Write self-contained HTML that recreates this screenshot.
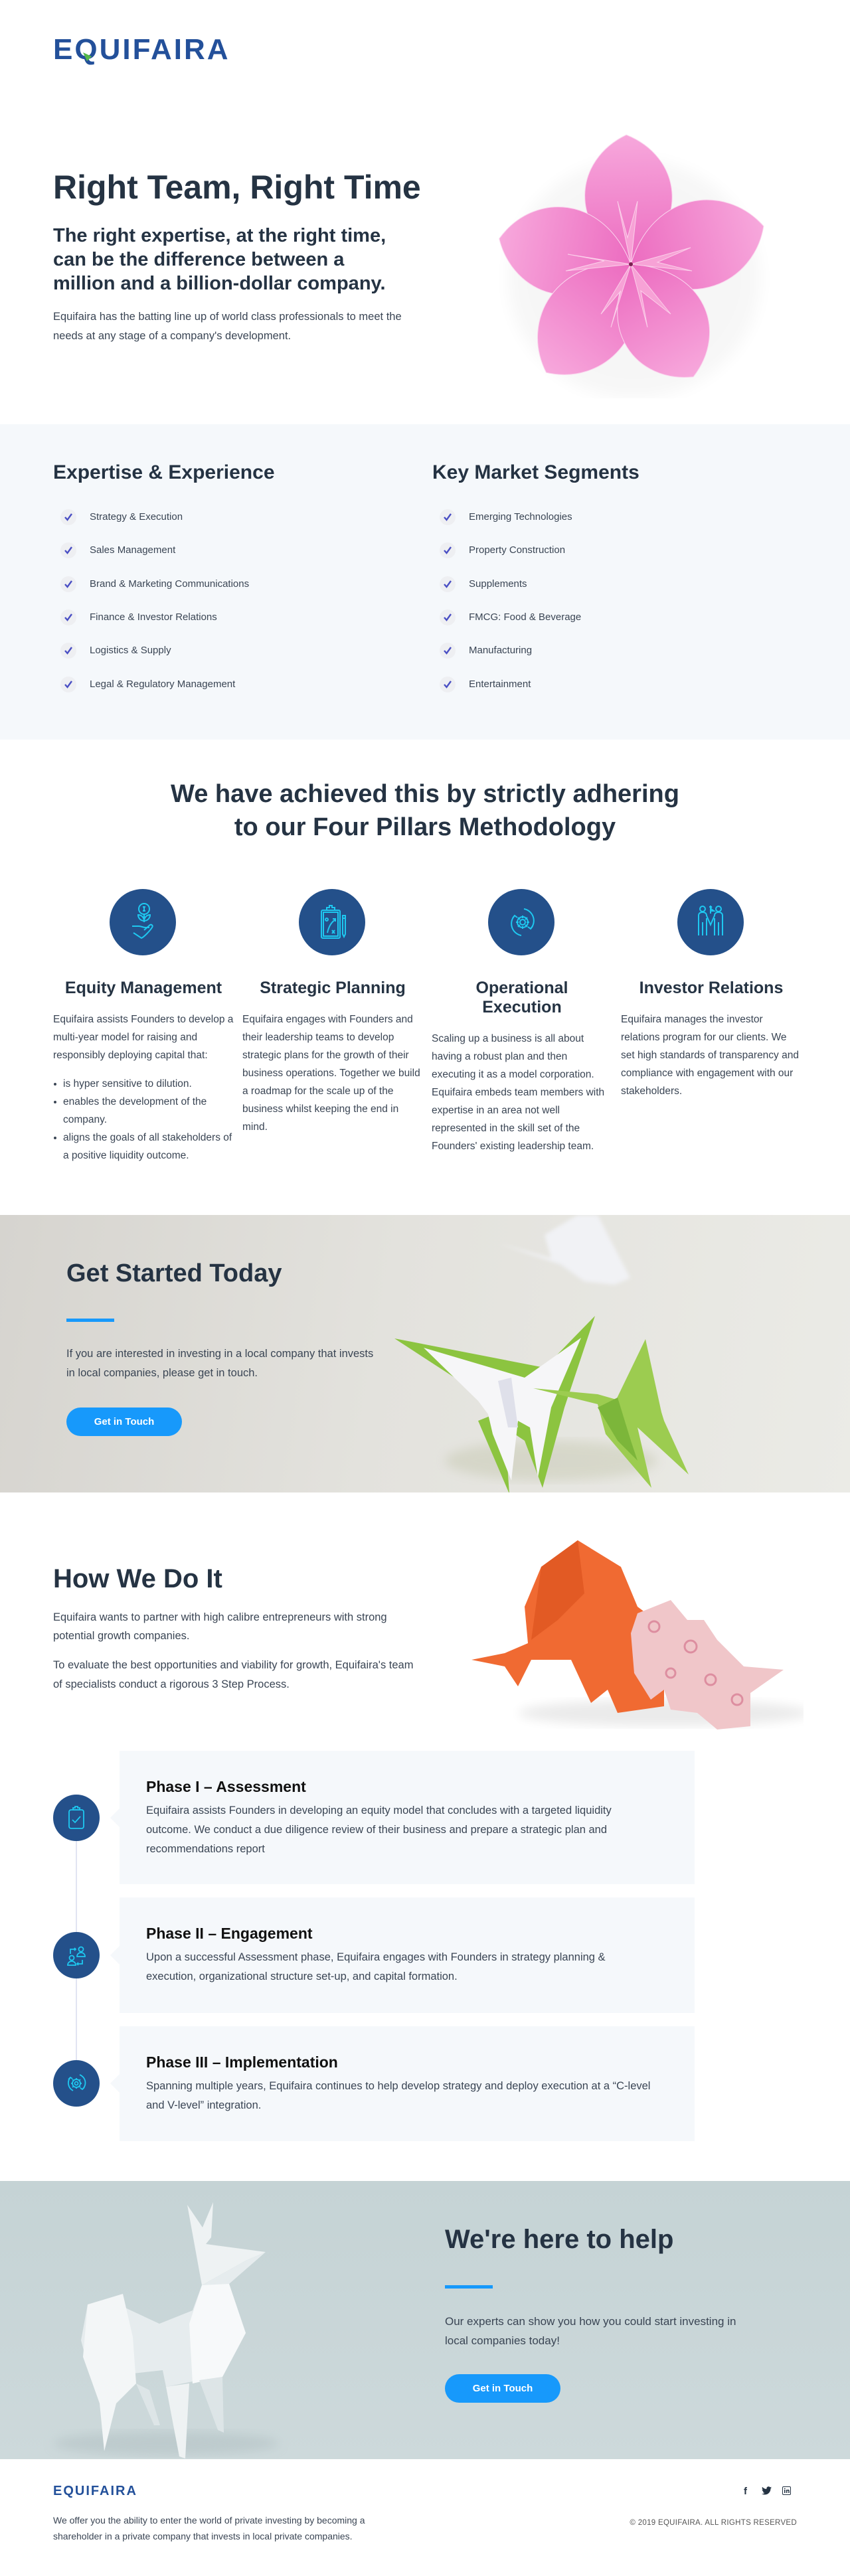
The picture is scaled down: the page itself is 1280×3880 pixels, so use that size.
<!DOCTYPE html>
<html><head><meta charset="utf-8">
<style>
*{margin:0;padding:0;box-sizing:border-box}
body{width:1280px;height:3880px;position:relative;background:#fff;font-family:"Liberation Sans",Arial,sans-serif;color:#253343;overflow:hidden}
.a{position:absolute}
.h{font-weight:bold;color:#253343}
.p{font-size:16.5px;color:#3a4554}
.btn{position:absolute;background:#1799fb;color:#fff;font-weight:bold;font-size:15px;border-radius:22px;text-align:center;line-height:43px;height:43px;width:174px}
.bar{position:absolute;height:5px;width:72px;background:#1799fb}
.li{position:absolute;font-size:15px;color:#3a4554;line-height:24px;height:24px;padding-left:44px}
.li:before{content:"";position:absolute;left:0;top:0;width:24px;height:24px;border-radius:50%;background:#eeeff2}
.li svg{position:absolute;left:5px;top:5px}
.col{position:absolute;width:272px;top:1474px}
.col h3{font-size:25px;line-height:29px;text-align:center;color:#253343;margin-bottom:19px}
.col p,.col li{font-size:15.5px;line-height:27px;color:#3a4554}
.col ul{list-style:none;margin-top:16px}
.col li{position:relative;padding-left:15px}
.col li:before{content:"";position:absolute;left:1px;top:12px;width:4px;height:4px;border-radius:50%;background:#3a4554}
.circ{position:absolute;width:100px;height:100px;border-radius:50%;background:#24508a;top:1339px}
.card{position:absolute;left:180px;width:866px;background:#f5f8fb;padding:40px 0 0 40px}
.card:before{content:"";position:absolute;left:-14px;border:14px solid transparent;border-right-color:#f5f8fb;border-left:0;top:var(--n)}
.card h4{font-size:23px;line-height:28px;color:#111;font-weight:bold}
.card p{font-size:16.5px;line-height:29px;color:#3a4554;margin-top:8px;width:760px}
.pc{position:absolute;left:80px;width:70px;height:70px;border-radius:50%;background:#24508a}
</style></head><body>

<div class="a" style="left:80px;top:53px;font-size:44px;line-height:44px;font-weight:bold;color:#23509a;letter-spacing:3px">EQUIFAIRA</div>
<svg class="a" style="left:125px;top:79px" width="14" height="14"><polygon points="0,0 13,6 6,13" fill="#55b848"/></svg>

<div class="a h" style="left:80px;top:254px;font-size:50px;line-height:56px;white-space:nowrap">Right Team, Right Time</div>
<div class="a h" style="left:80px;top:337px;font-size:29px;line-height:36px;width:620px">The right expertise, at the right time,<br>can be the difference between a<br>million and a billion-dollar company.</div>
<div class="a p" style="left:80px;top:463px;line-height:28.5px;width:600px">Equifaira has the batting line up of world class professionals to meet the<br>needs at any stage of a company's development.</div>

<svg class="a" style="left:700px;top:180px" width="480" height="420" viewBox="700 180 480 420">
<defs><linearGradient id="pk" x1="0" y1="1" x2="0" y2="0"><stop offset="0" stop-color="#ec6cc0"/><stop offset="1" stop-color="#f7a8dc"/></linearGradient>
<filter id="sh"><feGaussianBlur stdDeviation="12"/></filter></defs>
<ellipse cx="955" cy="420" rx="190" ry="180" fill="#000" opacity="0.03" filter="url(#sh)"/>
<g transform="translate(950,398)">
<g fill="url(#pk)" stroke="#fad6ee" stroke-width="1">
<path transform="rotate(-2)" d="M0,0 C-95,-60 -80,-160 0,-195 C80,-160 95,-60 0,0Z"/>
<path transform="rotate(74)" d="M0,0 C-95,-60 -80,-170 0,-208 C80,-170 95,-60 0,0Z"/>
<path transform="rotate(-79)" d="M0,0 C-95,-60 -80,-165 0,-202 C80,-165 95,-60 0,0Z"/>
<path transform="rotate(-142)" d="M0,0 C-95,-60 -80,-170 0,-207 C80,-170 95,-60 0,0Z"/>
<path transform="rotate(151)" d="M0,0 C-95,-60 -80,-160 0,-194 C80,-160 95,-60 0,0Z"/>
</g>
<g fill="#f7a2d6" stroke="#fbd0ea" stroke-width="1">
<path d="M0,0 L-20,-95 L-5,-40 L10,-95Z"/><path d="M0,0 L-95,-15 L-40,-5 L-98,10Z"/><path d="M0,0 L90,-25 L40,-3 L92,10Z"/>
<path d="M0,0 L-45,75 L-15,40 L-30,95Z"/><path d="M0,0 L25,95 L15,40 L60,75Z"/></g>
<circle r="3" fill="#7a2050"/></g>
</svg>

<div class="a" style="left:0;top:639px;width:1280px;height:475px;background:#f5f8fb"></div>
<div class="a h" style="left:80px;top:695px;font-size:30px;line-height:34px">Expertise &amp; Experience</div>
<div class="a h" style="left:651px;top:695px;font-size:30px;line-height:34px">Key Market Segments</div>
<div id="lists"></div>
<script>
var L=["Strategy & Execution","Sales Management","Brand & Marketing Communications","Finance & Investor Relations","Logistics & Supply","Legal & Regulatory Management"];
var R=["Emerging Technologies","Property Construction","Supplements","FMCG: Food & Beverage","Manufacturing","Entertainment"];
var ck='<svg width="14" height="14" viewBox="0 0 14 14"><path d="M2,7 L5.5,11 L12,2" fill="none" stroke="#4a4fc4" stroke-width="2.4"/></svg>';
var h='';for(var i=0;i<6;i++){var y=767+i*50.3;
h+='<div class="li" style="left:91px;top:'+y+'px">'+ck+L[i].replace('&','&amp;')+'</div>';
h+='<div class="li" style="left:662px;top:'+y+'px">'+ck+R[i].replace('&','&amp;')+'</div>';}
document.getElementById('lists').outerHTML=h;
</script>

<div class="a h" style="left:0;width:1280px;top:1171px;font-size:38px;line-height:50px;text-align:center">We have achieved this by strictly adhering<br>to our Four Pillars Methodology</div>

<div class="circ" style="left:165px"><svg width="100" height="100" viewBox="0 0 100 100" fill="none" stroke="#1ec8f0" stroke-width="2"><circle cx="52" cy="30" r="8"/><path d="M52,26v8M50,27h4M50,33h4"/><path d="M52,38v12M52,48c-6,0-9-5-9-9c5,0 9,4 9,9zM52,48c6,0 9-5 9-9c-5,0-9,4-9,9z"/><path d="M34,56h10c4,0 6,2 10,2h6M36,66l12,8c4-2 12-10 16-16c2-3-1-5-3-4l-9,8"/></svg></div>
<div class="circ" style="left:450px"><svg width="100" height="100" viewBox="0 0 100 100" fill="none" stroke="#1ec8f0" stroke-width="2"><rect x="34" y="32" width="28" height="42" rx="2"/><rect x="37" y="35" width="22" height="36"/><path d="M42,32v-4h4v-3h4v3h4v4z"/><circle cx="42" cy="46" r="2"/><path d="M43,66c2-10 6-16 12-20M51,45h4v4M50,62l4,5M54,62l-4,5"/><path d="M66,40v28l2,4l2-4v-28zM66,44h4"/></svg></div>
<div class="circ" style="left:735px"><svg width="100" height="100" viewBox="0 0 100 100" fill="none" stroke="#1ec8f0" stroke-width="2"><path d="M40,40a18,18 0 0,0 10,30M54,30a18,18 0 0,1 10,30"/><path d="M37,44l3-4l4,3M67,56l-3,4l-4-3"/><circle cx="52" cy="50" r="4"/><path d="M52,40v4M52,56v4M42,50h4M58,50h4M45,43l3,3M56,54l3,3M59,43l-3,3M45,57l3-3"/><circle cx="52" cy="50" r="8"/></svg></div>
<div class="circ" style="left:1020px"><svg width="100" height="100" viewBox="0 0 100 100" fill="none" stroke="#1ec8f0" stroke-width="2"><circle cx="38" cy="30" r="4"/><circle cx="62" cy="30" r="4"/><path d="M50,25v12M48,27h4c-4,2 0,4 3,6h-6"/><path d="M32,70v-30c0-3 2-5 6-5c4,0 6,2 6,5l6,14l6-14c0-3 2-5 6-5c4,0 6,2 6,5v30M38,50v20M62,50v20M44,44v26M56,44v26"/></svg></div>

<div class="col" style="left:80px"><h3>Equity Management</h3><p>Equifaira assists Founders to develop a multi-year model for raising and responsibly deploying capital that:</p><ul><li>is hyper sensitive to dilution.</li><li>enables the development of the company.</li><li>aligns the goals of all stakeholders of a positive liquidity outcome.</li></ul></div>
<div class="col" style="left:365px"><h3>Strategic Planning</h3><p>Equifaira engages with Founders and their leadership teams to develop strategic plans for the growth of their business operations. Together we build a roadmap for the scale up of the business whilst keeping the end in mind.</p></div>
<div class="col" style="left:650px"><h3>Operational<br>Execution</h3><p>Scaling up a business is all about having a robust plan and then executing it as a model corporation. Equifaira embeds team members with expertise in an area not well represented in the skill set of the Founders' existing leadership team.</p></div>
<div class="col" style="left:935px"><h3>Investor Relations</h3><p>Equifaira manages the investor relations program for our clients. We set high standards of transparency and compliance with engagement with our stakeholders.</p></div>

<div class="a" style="left:0;top:1830px;width:1280px;height:418px;background:linear-gradient(100deg,#d6d4cf 0%,#e3e2dd 45%,#ebebe6 100%)"></div>
<svg class="a" style="left:560px;top:1830px" width="560" height="418" viewBox="560 1830 560 418">
<defs><filter id="bl"><feGaussianBlur stdDeviation="3"/></filter><filter id="bl2"><feGaussianBlur stdDeviation="8"/></filter></defs>
<g filter="url(#bl)"><polygon points="751,1873 830,1895 820,1860 870,1830 900,1830 949,1925 925,1935 880,1930 845,1905" fill="#f1f2f5"/><polygon points="830,1895 880,1930 845,1905" fill="#dcdfe8"/></g>
<ellipse cx="830" cy="2200" rx="160" ry="30" fill="#9aa070" opacity="0.2" filter="url(#bl2)"/>
<polygon points="594,2016 700,2085 740,2132 720,2140 767,2250 760,2150 790,2170 817,2241 850,2120 896,1982 820,2060" fill="#8cc440"/>
<polygon points="638,2030 720,2110 735,2130 742,2160 770,2230 780,2140 798,2150 810,2225 830,2120 875,2015 790,2075" fill="#f6f6f8"/>
<polygon points="750,2080 770,2075 780,2150 765,2150" fill="#dfe0ea"/>
<polygon points="803,2091 900,2115 912,2160 981,2241 960,2150 1037,2221 1000,2140 996,2127 972,2017 928,2108 900,2100" fill="#9ccc50"/>
<polygon points="900,2120 930,2105 950,2170 960,2200 930,2170" fill="#7cb63a"/>
</svg>
<div class="a h" style="left:100px;top:1896px;font-size:38px;line-height:44px">Get Started Today</div>
<div class="bar" style="left:100px;top:1986px"></div>
<div class="a p" style="left:100px;top:2025px;line-height:29px;width:560px">If you are interested in investing in a local company that invests<br>in local companies, please get in touch.</div>
<div class="btn" style="left:100px;top:2120px">Get in Touch</div>

<div class="a h" style="left:80px;top:2356px;font-size:40px;line-height:44px">How We Do It</div>
<div class="a p" style="left:80px;top:2422px;line-height:28px;width:640px">Equifaira wants to partner with high calibre entrepreneurs with strong<br>potential growth companies.</div>
<div class="a p" style="left:80px;top:2494px;line-height:29px;width:660px">To evaluate the best opportunities and viability for growth, Equifaira's team<br>of specialists conduct a rigorous 3 Step Process.</div>
<svg class="a" style="left:700px;top:2310px" width="510" height="300" viewBox="700 2310 510 300">
<ellipse cx="1000" cy="2580" rx="220" ry="20" fill="#000" opacity="0.08" filter="url(#bl2)"/>
<polygon points="710,2500 760,2490 795,2475 790,2420 815,2360 870,2320 935,2360 960,2420 1000,2450 1000,2570 930,2580 915,2545 890,2565 860,2500 800,2500 780,2540 760,2510" fill="#f06a32"/>
<polygon points="815,2360 870,2320 880,2400 840,2440 800,2470" fill="#e25a24"/>
<polygon points="950,2460 960,2430 1010,2410 1035,2440 1060,2440 1080,2470 1120,2510 1180,2515 1130,2550 1130,2600 1080,2605 1050,2580 1010,2575 1000,2545 980,2560 955,2520" fill="#f0c6c9"/>
<g fill="none" stroke="#d26a86" stroke-width="3" opacity="0.6"><circle cx="985" cy="2450" r="8"/><circle cx="1040" cy="2480" r="9"/><circle cx="1070" cy="2530" r="8"/><circle cx="1010" cy="2520" r="7"/><circle cx="1110" cy="2560" r="8"/></g>
</svg>

<div class="a" style="left:114px;top:2773px;width:2px;height:330px;background:#e1e4f2"></div>
<div class="card" style="top:2637px;height:201px;--n:87px"><h4>Phase I – Assessment</h4><p>Equifaira assists Founders in developing an equity model that concludes with a targeted liquidity outcome. We conduct a due diligence review of their business and prepare a strategic plan and recommendations report</p></div>
<div class="card" style="top:2858px;height:174px;--n:73px"><h4>Phase II – Engagement</h4><p>Upon a successful Assessment phase, Equifaira engages with Founders in strategy planning &amp; execution, organizational structure set-up, and capital formation.</p></div>
<div class="card" style="top:3052px;height:173px;--n:72px"><h4>Phase III – Implementation</h4><p>Spanning multiple years, Equifaira continues to help develop strategy and deploy execution at a “C-level and V-level” integration.</p></div>
<div class="pc" style="top:2703px"><svg width="70" height="70" viewBox="0 0 70 70" fill="none" stroke="#1ec8f0" stroke-width="1.8"><rect x="24" y="23" width="22" height="28" rx="3"/><path d="M30,23v-3h3v-2h4v2h3v3z"/><path d="M29,38l4,4l8-9"/></svg></div>
<div class="pc" style="top:2910px"><svg width="70" height="70" viewBox="0 0 70 70" fill="none" stroke="#1ec8f0" stroke-width="1.8"><circle cx="42" cy="26" r="3.5"/><path d="M36,37c0-4 3-6 6-6s6,2 6,6z"/><circle cx="28" cy="39" r="3.5"/><path d="M22,50c0-4 3-6 6-6s6,2 6,6z"/><path d="M26,33v-7h8M32,24l2,2l-2,2M44,42v6h-8M38,46l-2,2l2,2"/></svg></div>
<div class="pc" style="top:3103px"><svg width="70" height="70" viewBox="0 0 70 70" fill="none" stroke="#1ec8f0" stroke-width="1.8"><path d="M26,26a13,13 0 0,0 4,20M40,22a13,13 0 0,1 4,22"/><path d="M23,29l3-3l3,2M47,41l-3,3l-3-2"/><circle cx="35" cy="35" r="6"/><circle cx="35" cy="35" r="2.5"/><path d="M35,27v2M35,41v2M27,35h2M41,35h2M29,29l2,2M39,39l2,2M41,29l-2,2M29,41l2-2"/></svg></div>

<div class="a" style="left:0;top:3285px;width:1280px;height:419px;background:linear-gradient(180deg,#c5d3d5,#cdd9db)"></div>
<svg class="a" style="left:0;top:3285px" width="560" height="419" viewBox="0 3285 560 419">
<ellipse cx="250" cy="3680" rx="170" ry="18" fill="#aebdc0" opacity="0.5" filter="url(#bl2)"/>
<polygon points="282,3321 305,3355 321,3317 318,3370 310,3380 400,3392 370,3405 304,3442" fill="#eef2f3"/>
<polygon points="304,3442 370,3405 400,3392 345,3440 370,3514 335,3580 300,3585 250,3595 245,3570 200,3575 130,3555 122,3525 132,3471 165,3465 240,3500 290,3480" fill="#e6ecee"/>
<polygon points="304,3442 345,3440 370,3514 335,3580 290,3590 285,3500" fill="#f7f9fa"/>
<polygon points="132,3471 185,3455 200,3520 205,3590 175,3620 157,3692 150,3620 125,3550" fill="#f3f6f7"/>
<polygon points="250,3595 285,3590 279,3703 270,3700" fill="#eef2f3"/>
<polygon points="300,3585 335,3580 337,3664 328,3660" fill="#dde5e7"/>
<polygon points="205,3590 225,3600 241,3653 232,3653" fill="#dde5e7"/>
</svg>
<div class="a h" style="left:670px;top:3351px;font-size:40px;line-height:44px">We're here to help</div>
<div class="bar" style="left:670px;top:3442px"></div>
<div class="a p" style="left:670px;top:3482px;line-height:29px;width:520px;font-size:17px">Our experts can show you how you could start investing in<br>local companies today!</div>
<div class="btn" style="left:670px;top:3576px">Get in Touch</div>

<div class="a" style="left:80px;top:3741px;font-size:20px;line-height:22px;font-weight:bold;color:#23509a;letter-spacing:2px">EQUIFAIRA</div>
<div class="a" style="left:80px;top:3784px;font-size:14px;line-height:24px;color:#3a4554;white-space:nowrap">We offer you the ability to enter the world of private investing by becoming a<br>shareholder in a private company that invests in local private companies.</div>
<div class="a" style="left:1120px;top:3744px;font-size:15px;font-weight:bold;color:#253343">f</div>
<svg class="a" style="left:1147px;top:3745px" width="15" height="13" viewBox="0 0 24 20"><path d="M24,2.4c-.9.4-1.8.7-2.8.8c1-.6 1.8-1.6 2.2-2.7c-1 .6-2 1-3.1 1.2C19.3.7 18 0 16.6 0c-2.7 0-4.9 2.2-4.9 4.9c0 .4 0 .8.1 1.1C7.7 5.8 4.1 3.9 1.7.9c-.4.7-.7 1.6-.7 2.5c0 1.7.9 3.2 2.2 4.1c-.8 0-1.6-.2-2.2-.6v.1c0 2.4 1.7 4.4 3.900 4.8c-.4.1-.8.2-1.3.2c-.3 0-.6 0-.9-.1c.6 2 2.4 3.4 4.6 3.4c-1.7 1.300-3.8 2.1-6.1 2.1c-.4 0-.8 0-1.2-.1c2.2 1.4 4.8 2.2 7.5 2.2c9.1 0 14-7.5 14-14v-.6c1-.7 1.8-1.6 2.5-2.5z" fill="#253343"/></svg>
<svg class="a" style="left:1178px;top:3745px" width="13" height="13" viewBox="0 0 13 13"><rect x="0.5" y="0.5" width="12" height="12" rx="1.5" fill="none" stroke="#253343"/><rect x="3" y="5" width="1.6" height="5" fill="#253343"/><circle cx="3.8" cy="3.4" r="0.9" fill="#253343"/><path d="M6,10V5h1.5v.7c.4-.6 1-.8 1.6-.8c1.1 0 1.6.7 1.6 1.9V10H9.2V7.2c0-.6-.2-1-.8-1s-.9.4-.9 1V10z" fill="#253343"/></svg>
<div class="a" style="left:900px;top:3792px;width:300px;text-align:right;font-size:11.5px;line-height:16px;color:#555;letter-spacing:0.3px;white-space:nowrap">© 2019 EQUIFAIRA. ALL RIGHTS RESERVED</div>
</body></html>
